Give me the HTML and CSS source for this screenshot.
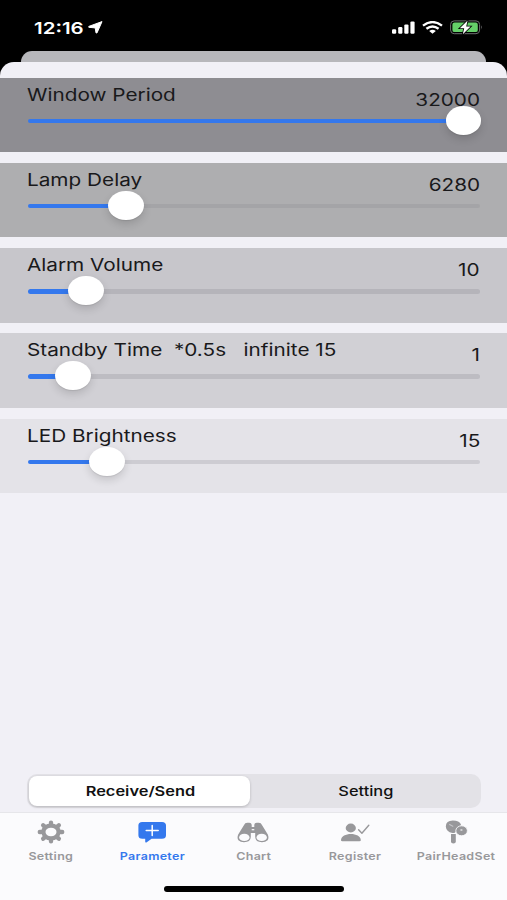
FILE: index.html
```
<!DOCTYPE html>
<html lang="en">
<head>
  <meta charset="UTF-8" />
  <meta name="viewport" content="width=device-width, initial-scale=1" />
  <title>Parameter</title>
  <link rel="stylesheet" href="styles.css">
</head>
<body>

<div class="screen">
  <header class="status-bar">
    <div class="clock">
      <span class="time">12:16</span>
      <svg class="location" width="15" height="13" viewBox="0 0 15 13"><path d="M14 0.6 L0.8 5.4 L0.8 6.3 L7.2 6.9 L8 11.9 L9 11.9 Z" fill="#fff" stroke="#fff" stroke-width="1" stroke-linejoin="round"/></svg>
    </div>
    <div class="indicators">
      <svg width="23" height="13" viewBox="0 0 23 13" fill="#fff">
        <rect x="0" y="8.2" width="4.2" height="4.6" rx="1.2"/>
        <rect x="6.2" y="6" width="4.2" height="6.8" rx="1.2"/>
        <rect x="12.3" y="3.4" width="4.2" height="9.4" rx="1.2"/>
        <rect x="18.4" y="0.4" width="4.2" height="12.4" rx="1.2"/>
      </svg>
      <svg class="wifi" width="21" height="13" viewBox="0 0 21 13" fill="none" stroke="#fff" stroke-width="2.4">
        <path d="M1 4.6 Q10.5 -2.4 20 4.6"/>
        <path d="M4.4 7.8 Q10.5 3.2 16.6 7.8"/>
        <path d="M7.2 10 Q10.5 7.6 13.8 10 L10.5 12.8 Z" fill="#fff" stroke="none"/>
      </svg>
      <svg class="battery" width="33" height="15" viewBox="0 0 33 15">
        <rect x="0.6" y="0.9" width="29" height="12.8" rx="3.6" fill="none" stroke="#6e6e70" stroke-width="1"/>
        <rect x="2.4" y="2.5" width="25.4" height="9.6" rx="2.2" fill="#65cf69"/>
        <path d="M31 5.2 Q32.8 7.3 31 9.4 Z" fill="#77777a"/>
        <path d="M17.6 0.6 L9.8 8.2 H14.2 L12.8 14.2 L20.6 6.5 H16.2 Z" fill="#fff" stroke="#000" stroke-width="1.6" paint-order="stroke"/>
      </svg>
    </div>
  </header>

  <div class="sheet-back"></div>

  <main class="sheet">
    <section class="params">
      <div class="param shade-1">
        <span class="label">Window Period</span>
        <span class="value">32000</span>
        <div class="slider"><div class="fill" style="width: 435.5px"></div><div class="thumb"></div><div class="rest"></div></div>
      </div>
      <div class="param shade-2">
        <span class="label">Lamp Delay</span>
        <span class="value">6280</span>
        <div class="slider"><div class="fill" style="width: 98px"></div><div class="thumb"></div><div class="rest"></div></div>
      </div>
      <div class="param shade-3">
        <span class="label">Alarm Volume</span>
        <span class="value">10</span>
        <div class="slider"><div class="fill" style="width: 58px"></div><div class="thumb"></div><div class="rest"></div></div>
      </div>
      <div class="param shade-4">
        <span class="label">Standby Time&nbsp; *0.5s &nbsp; infinite 15</span>
        <span class="value">1</span>
        <div class="slider"><div class="fill" style="width: 45px"></div><div class="thumb"></div><div class="rest"></div></div>
      </div>
      <div class="param shade-5">
        <span class="label">LED Brightness</span>
        <span class="value">15</span>
        <div class="slider"><div class="fill" style="width: 79px"></div><div class="thumb"></div><div class="rest"></div></div>
      </div>
    </section>

    <div class="segmented">
      <div class="segment selected"><span>Receive/Send</span></div>
      <div class="segment"><span>Setting</span></div>
    </div>

    <nav class="tab-bar">
      <div class="tab">
        <svg width="28" height="24" viewBox="0 0 28 24">
          <ellipse cx="14" cy="12" rx="7.6" ry="6.4" fill="none" stroke="currentColor" stroke-width="4.2"/>
          <path d="M14 3.6V2.8M14 20.4v.8M4 12H2.8M24 12h1.2M7 6l-.8-.7M21 6l.8-.7M7 18l-.8.7M21 18l.8.7" stroke="currentColor" stroke-width="4.4" stroke-linecap="round"/>
        </svg>
        <span>Setting</span>
      </div>
      <div class="tab active">
        <svg width="28" height="24" viewBox="0 0 28 24">
          <path d="M4.2 2 H24 Q28 2 28 5.6 V15.2 Q28 18.8 24 18.8 H13.6 L8.4 22.4 Q7.2 23 7.2 21.6 V18.8 H4.4 Q0.4 18.8 0.4 15.2 V5.6 Q0.4 2 4.2 2 Z" fill="currentColor"/>
          <path d="M14.2 5.6V15.4M8.2 10.5H20.2" stroke="#fff" stroke-width="1.5" stroke-linecap="round"/>
        </svg>
        <span>Parameter</span>
      </div>
      <div class="tab">
        <svg width="32" height="24" viewBox="0 0 32 24">
          <path d="M7.2 4.8 Q7.8 2.8 10.2 2.8 H12.3 Q14.5 2.8 14.7 4.8 V7 H17.3 V4.8 Q17.5 2.8 19.7 2.8 H21.8 Q24.2 2.8 24.8 4.8 L30.8 14.4 Q32.2 18 30.6 20.2 Q28.5 22.2 25 22.2 Q18.4 22.2 18.2 17 V13 H13.8 V17 Q13.6 22.2 7 22.2 Q3.5 22.2 1.4 20.2 Q-0.2 18 1.2 14.4 Z" fill="currentColor"/>
          <path d="M14.7 9.7H17.3" stroke="#fbfbfd" stroke-width="1.2"/>
          <ellipse cx="7.3" cy="17.4" rx="5.2" ry="3.6" fill="#fbfbfd"/>
          <ellipse cx="24.7" cy="17.4" rx="5.2" ry="3.6" fill="#fbfbfd"/>
        </svg>
        <span>Chart</span>
      </div>
      <div class="tab">
        <svg width="30" height="24" viewBox="0 0 30 24">
          <ellipse cx="10.8" cy="8" rx="5.1" ry="4.4" fill="currentColor"/>
          <path d="M1 20.2 C1 11.8 20.8 11.8 20.8 20.2 Q20.8 21.3 19.4 21.3 H2.4 Q1 21.3 1 20.2 Z" fill="currentColor"/>
          <path d="M18.6 9.7 L21.9 13.2 L28.8 5.3" fill="none" stroke="currentColor" stroke-width="1.4" stroke-linecap="round" stroke-linejoin="round"/>
        </svg>
        <span>Register</span>
      </div>
      <div class="tab">
        <svg width="24" height="24" viewBox="0 0 24 24">
          <path d="M7 14 H11.8 V21.8 Q11.8 23.6 9.4 23.6 Q7 23.6 7 21.8 Z" fill="currentColor"/>
          <path d="M1.8 6.4 Q2 0.8 8.8 0.6 Q15.4 0.6 17 4.6 Q16.6 7.4 13 9.4 Q12 13.2 8.4 13 Q2.2 11.8 1.8 6.4 Z" fill="currentColor"/>
          <path d="M5.6 4.4 L8.8 6.2" stroke="#c4c4c7" stroke-width="1.1" stroke-linecap="round"/>
          <ellipse cx="17.6" cy="10.8" rx="5.8" ry="5" fill="currentColor" stroke="#fbfbfd" stroke-width="0.9"/>
          <ellipse cx="17.4" cy="10" rx="1.2" ry="1" fill="#d4d4d6"/>
        </svg>
        <span>PairHeadSet</span>
      </div>
    </nav>
    <div class="home-indicator"></div>
  </main>
</div>

</body>
</html>
```
FILE: styles.css
```
* {
  box-sizing: border-box;
}
body {
  margin: 0;
  background: #000;
  font-family: Inter, 'Liberation Sans', sans-serif;
  color: #19191b;
}
.screen {
  width: 507px;
  height: 900px;
  display: flex;
  flex-direction: column;
  overflow: hidden;
}
.status-bar {
  height: 51px;
  padding: 4px 24px 0 34px;
  display: flex;
  align-items: center;
  justify-content: space-between;
  flex-shrink: 0;
}
.clock {
  display: flex;
  align-items: center;
  gap: 14px;
}
.time {
  color: #fff;
  font-size: 16.5px;
  font-weight: 600;
  transform: scaleX(1.24);
  transform-origin: left;
}
.indicators {
  display: flex;
  align-items: center;
}
.wifi {
  margin-left: 7px;
}
.battery {
  margin-left: 7px;
}
.sheet-back {
  height: 11px;
  margin: 0 21px;
  flex-shrink: 0;
  background: #b7b7bb;
  border-radius: 12px 12px 0 0;
}
.sheet {
  flex: 1;
  display: flex;
  flex-direction: column;
  background: #f1f0f6;
  border-radius: 14px 14px 0 0;
}
.params {
  padding-top: 15.8px;
  display: flex;
  flex-direction: column;
  gap: 10.7px;
}
.param {
  height: 74.5px;
  padding: 6px 27px 0 28px;
  display: grid;
  grid-template-columns: 1fr auto;
  grid-template-rows: 22px 29px;
}
.shade-1 { background: #8e8d92; }
.shade-2 { background: #aeaeb0; }
.shade-3 { background: #c7c6cb; }
.shade-4 { background: #d1d0d5; }
.shade-5 { background: #e4e3e8; }
.label,
.value {
  font-size: 17px;
  line-height: 22px;
  white-space: pre;
  transform: scaleX(1.22);
}
.label {
  justify-self: start;
  margin-left: -1px;
  transform-origin: left;
}
.value {
  padding-top: 5px;
  transform-origin: right;
}
.slider {
  grid-column: span 2;
  display: flex;
  align-items: center;
}
.fill,
.rest {
  height: 4.5px;
  margin-top: 1.5px;
  border-radius: 3px;
}
.fill {
  flex-shrink: 0;
  background: #3478ed;
}
.rest {
  flex: 1;
  background: rgba(90, 90, 100, 0.16);
}
.shade-2 .rest {
  background: #a4a4a7;
}
.thumb {
  width: 35.5px;
  height: 29px;
  margin: 0 -17.75px;
  flex-shrink: 0;
  position: relative;
  border-radius: 50%;
  background: #fff;
  box-shadow: 0 4px 9px rgba(0, 0, 0, 0.14), 0 1px 1px rgba(0, 0, 0, 0.08);
}
.segmented {
  height: 34px;
  margin: auto 26px 4.5px 27px;
  padding: 2px;
  display: flex;
  flex-shrink: 0;
  border-radius: 10px;
  background: #e3e2e7;
}
.segment {
  flex: 1;
  display: flex;
  align-items: center;
  justify-content: center;
  color: #111;
  font-size: 13px;
  font-weight: 500;
}
.segment.selected {
  flex: 0 0 221px;
  border-radius: 8px;
  background: #fff;
  box-shadow: 0 1px 3px rgba(0, 0, 0, 0.2);
  font-weight: 600;
}
.segment span {
  transform: translateX(1px) scaleX(1.26);
}
.tab-bar {
  height: 74px;
  padding-top: 7px;
  display: grid;
  grid-template-columns: repeat(5, 1fr);
  flex-shrink: 0;
  background: #fbfbfd;
  border-top: 1px solid #e6e6ea;
}
.tab {
  display: flex;
  flex-direction: column;
  align-items: center;
  color: #98989b;
}
.tab span {
  margin-top: 6px;
  font-size: 10.5px;
  line-height: 14px;
  font-weight: 600;
  letter-spacing: 0.25px;
  transform: scaleX(1.19);
}
.tab.active {
  color: #3478ed;
}
.home-indicator {
  height: 14px;
  display: flex;
  justify-content: center;
  flex-shrink: 0;
  background: #fbfbfd;
}
.home-indicator::before {
  content: "";
  width: 180px;
  height: 5.5px;
  border-radius: 3px;
  background: #000;
}
```
